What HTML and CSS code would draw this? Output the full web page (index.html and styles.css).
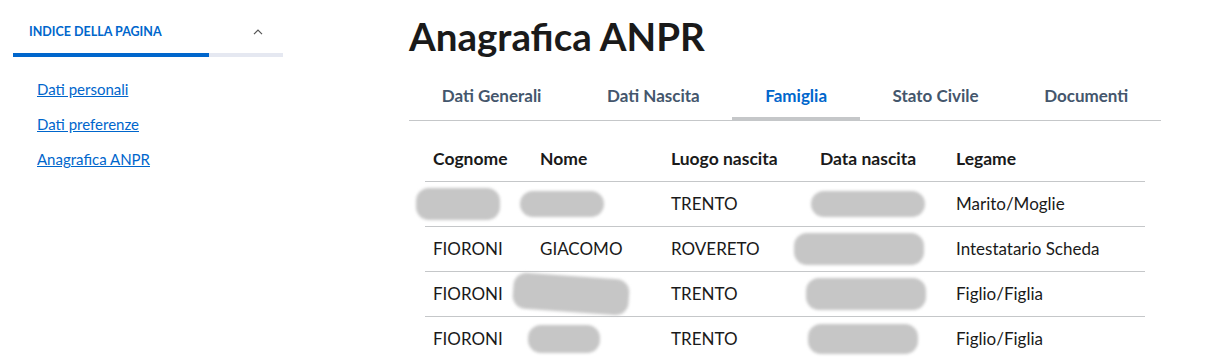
FILE: index.html
```html
<!DOCTYPE html>
<html lang="it">
<head>
    <meta charset="UTF-8">
    <title>Anagrafica ANPR</title>
    <link rel="stylesheet" href="styles.css">
</head>
<body>
    <div id="page">
        <aside id="sidebar">
            <div class="index-head">
                <span>Indice della pagina</span>
                <svg width="10" height="6" viewBox="0 0 10 6"><path d="M1 5.2 5 1.2 9 5.2" fill="none" stroke="#555" stroke-width="1.2"/></svg>
            </div>
            <div class="progress"><div class="progress-bar"></div></div>
            <ul class="index-links">
                <li><a href="#">Dati personali</a></li>
                <li><a href="#">Dati preferenze</a></li>
                <li><a href="#">Anagrafica ANPR</a></li>
            </ul>
        </aside>
        <main id="content">
            <h1>Anagrafica ANPR</h1>
            <div class="tabs">
                <a href="#">Dati Generali</a>
                <a href="#">Dati Nascita</a>
                <a href="#" class="active">Famiglia</a>
                <a href="#">Stato Civile</a>
                <a href="#">Documenti</a>
            </div>
            <table class="family">
                <thead>
                    <tr>
                        <th class="c-cognome">Cognome</th>
                        <th class="c-nome">Nome</th>
                        <th class="c-luogo">Luogo nascita</th>
                        <th class="c-data">Data nascita</th>
                        <th class="c-legame">Legame</th>
                    </tr>
                </thead>
                <tbody>
                    <tr>
                        <td><span class="blur b-cog"></span></td>
                        <td><span class="blur b-nome1"></span></td>
                        <td>TRENTO</td>
                        <td><span class="blur b-data1"></span></td>
                        <td>Marito/Moglie</td>
                    </tr>
                    <tr>
                        <td>FIORONI</td>
                        <td>GIACOMO</td>
                        <td>ROVERETO</td>
                        <td><span class="blur b-data2"></span></td>
                        <td>Intestatario Scheda</td>
                    </tr>
                    <tr>
                        <td>FIORONI</td>
                        <td><span class="blur b-nome3"></span></td>
                        <td>TRENTO</td>
                        <td><span class="blur b-data3"></span></td>
                        <td>Figlio/Figlia</td>
                    </tr>
                    <tr>
                        <td>FIORONI</td>
                        <td><span class="blur b-nome4"></span></td>
                        <td>TRENTO</td>
                        <td><span class="blur b-data4"></span></td>
                        <td>Figlio/Figlia</td>
                    </tr>
                </tbody>
            </table>
        </main>
    </div>
</body>
</html>
```

FILE: styles.css
```css
* {
    margin: 0;
    padding: 0;
    box-sizing: border-box;
}
body {
    font-family: Lato, "Noto Sans", sans-serif;
    color: #1a1a1a;
    background: #fff;
}
a {
    color: #0066cc;
}
#page {
    display: grid;
    grid-template-columns: 270px 752px;
    column-gap: 126px;
    padding-left: 13px;
}

/* indice */
.index-head {
    display: flex;
    justify-content: space-between;
    align-items: center;
    padding: 20px 20px 0 16px;
    height: 44px;
    font-size: 12.5px;
    font-weight: 700;
    line-height: 24px;
    color: #0066cc;
    text-transform: uppercase;
}
.progress {
    margin-top: 9px;
    height: 4px;
    background-color: #e5e8f1;
}
.progress-bar {
    width: 196px;
    height: 4px;
    background-color: #0066cc;
}
.index-links {
    list-style: none;
    padding: 20px 0 0 24px;
    display: flex;
    flex-direction: column;
    gap: 11px;
}
.index-links a {
    font-size: 15px;
    line-height: 24px;
}

/* contenuto */
#content h1 {
    margin-top: 12px;
    font-size: 38.5px;
    font-weight: 700;
    line-height: 48px;
    color: #1a1a1a;
}
.tabs {
    display: flex;
    margin-top: 12px;
    border-bottom: 1px solid #c5c7c9;
}
.tabs a {
    flex: 1 1 auto;
    text-align: center;
    padding: 12px 0 9px;
    line-height: 24px;
    font-size: 17px;
    font-weight: 700;
    color: #44566c;
    text-decoration: none;
    border-bottom: 3px solid transparent;
}
.tabs a.active {
    color: #0066cc;
    border-bottom-color: #c5c7c9;
}

.family {
    margin: 16px 0 0 16px;
    width: 720px;
    border-collapse: collapse;
    table-layout: fixed;
    font-size: 17px;
}
.family th,
.family td {
    height: 45px;
    padding: 0 8px;
    text-align: left;
    vertical-align: middle;
    white-space: nowrap;
}
.family th {
    height: 44px;
    font-size: 17.5px;
    font-weight: 700;
}
.family tr {
    border-bottom: 1px solid #c5c7c9;
}
.family tbody tr:last-child {
    border-bottom: none;
}
.c-cognome { width: 107px; }
.c-nome { width: 131px; }
.c-luogo { width: 149px; }
.c-data { width: 136px; }
.c-legame { width: 197px; }

/* dati oscurati */
.blur {
    display: inline-block;
    vertical-align: middle;
    height: 26px;
    border-radius: 13px;
    background-color: #c6c6c6;
    filter: blur(1.5px);
}
.b-cog { width: 84px; height: 32px; margin-left: -17px; }
.b-nome1 { width: 84px; margin-left: -20px; }
.b-nome3 { width: 116px; height: 36px; margin-left: -27px; transform: rotate(4deg); }
.b-nome4 { width: 72px; height: 28px; margin-left: -12px; }
.b-data1 { width: 114px; margin-left: -9px; }
.b-data2 { width: 130px; height: 32px; margin-left: -26px; }
.b-data3 { width: 120px; height: 32px; margin-left: -14px; }
.b-data4 { width: 110px; height: 30px; margin-left: -12px; }
```
